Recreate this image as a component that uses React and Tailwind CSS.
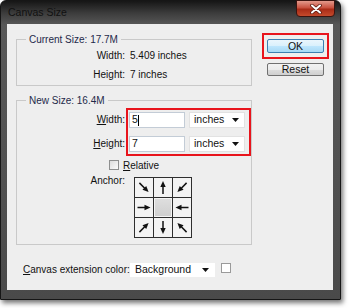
import React from 'react';

const ARROWS = [45, -90, 135, 0, null, 180, -45, 90, -135];

const Arrow = ({ angle }) => (
    <svg width="18" height="19" viewBox="0 0 18 19">
        <g transform={`rotate(${angle} 9 9.5)`}>
            <line x1="2.5" y1="9.5" x2="11" y2="9.5" stroke="#111" strokeWidth="1.5" />
            <polygon points="15.5,9.5 9.5,6.8 9.5,12.2" fill="#111" />
        </g>
    </svg>
);

const Dropdown = ({ value, className }) => (
    <div className={`flex items-center justify-between bg-white border border-[#e2e2e2] pl-[4px] pr-[5px] ${className}`}>
        <span>{value}</span>
        <svg width="7" height="4" viewBox="0 0 7 4">
            <path d="M0 0h7L3.5 4z" fill="#111" />
        </svg>
    </div>
);

const Legend = ({ children }) => (
    <legend className="ml-[9px] px-[3px] leading-[13px] text-[#1e2a4a]">{children}</legend>
);

const App = () => {
    return (
        <div className="w-[350px] h-[308px] bg-white font-['Liberation_Sans',Arial,sans-serif] text-[10px] text-[#111]">
            <div className="relative w-[341px] h-[300px] rounded-t-[6px] border border-[#161616] bg-[linear-gradient(to_bottom,#161616_0px,#3c3c3c_12px,#585858_24px,#4a4a4a_100%)] shadow-[2px_3px_5px_rgba(0,0,0,0.55)]">
                <div className="h-[23px] flex items-center pl-[7px] text-[10.5px] text-[#111]">Canvas Size</div>

                {/* close button */}
                <div className="absolute top-[-1px] right-[5px] w-[39px] h-[17px] rounded-b-[4px] border border-[#3a1410] bg-[linear-gradient(to_bottom,#e39a8c_0%,#c8513f_45%,#a92c17_55%,#c44a2c_100%)] flex items-center justify-center">
                    <svg width="12" height="10" viewBox="0 0 12 10">
                        <path d="M2 1.5L10 8.5M10 1.5L2 8.5" stroke="#5a1a10" strokeWidth="3.6" strokeLinecap="round" />
                        <path d="M2 1.5L10 8.5M10 1.5L2 8.5" stroke="#fff" strokeWidth="2" strokeLinecap="round" />
                    </svg>
                </div>

                <div className="ml-[6px] w-[326px] h-[266px] bg-[#eeeeee] flex pl-[9px] pt-[9px]">
                    <div className="w-[236px] flex flex-col">
                        <fieldset className="border border-[#c9c9c9] pb-[1px]">
                            <Legend>Current Size: 17.7M</Legend>
                            <div className="flex leading-[19px]">
                                <div className="w-[108px] text-right">
                                    <div>Width:</div>
                                    <div>Height:</div>
                                </div>
                                <div className="pl-[5px]">
                                    <div>5.409 inches</div>
                                    <div>7 inches</div>
                                </div>
                            </div>
                        </fieldset>

                        <fieldset className="mt-[8px] border border-[#c9c9c9] pb-[6px]">
                            <Legend>New Size: 16.4M</Legend>
                            <div className="flex mt-[1px]">
                                <div className="w-[108px] pt-[4px] flex flex-col gap-[8px] text-right leading-[16px]">
                                    <div><span className="underline">W</span>idth:</div>
                                    <div><span className="underline">H</span>eight:</div>
                                </div>
                                <div className="ml-[1px] border-2 border-[#e8141c] pl-[1px] pt-[2px] pr-[4px] pb-[2px] grid grid-cols-[56px_56px] gap-x-[4px] gap-y-[8px] text-[10.5px]">
                                    <div className="h-[16px] bg-white border border-[#c3ccd6] flex items-center pl-[2px]">
                                        5<span className="w-[1px] h-[11px] bg-black"></span>
                                    </div>
                                    <Dropdown value="inches" className="h-[16px]" />
                                    <div className="h-[16px] bg-white border border-[#c3ccd6] flex items-center pl-[2px]">7</div>
                                    <Dropdown value="inches" className="h-[16px]" />
                                </div>
                            </div>

                            <div className="mt-[2px] h-[14px] flex items-center pl-[92px] gap-[4px]">
                                <div className="w-[10px] h-[10px] border border-[#8e8f8f] bg-[linear-gradient(135deg,#dcdcdc,#fbfbfb)]"></div>
                                <span><span className="underline">R</span>elative</span>
                            </div>

                            <div className="flex items-start">
                                <div className="w-[108px] text-right leading-[13px] mt-[2px]">Anchor:</div>
                                <div className="ml-[9px] mt-[5px] grid grid-cols-[18px_18px_18px] grid-rows-[19px_19px_19px] gap-[1px] p-[1px] bg-[#2e2e2e]">
                                    {ARROWS.map((a, i) =>
                                        a === null ? (
                                            <div key={i} className="border border-[#f4f4f4] bg-[linear-gradient(to_bottom,#dedede,#cfcfcf)]"></div>
                                        ) : (
                                            <div key={i} className="bg-[#f3f3f3] flex items-center justify-center">
                                                <Arrow angle={a} />
                                            </div>
                                        )
                                    )}
                                </div>
                            </div>
                        </fieldset>

                        <div className="mt-[18px] flex items-start">
                            <div className="w-[114px] pl-[7px] h-[14px] leading-[14px] shrink-0">
                                <span className="underline">C</span>anvas extension color:
                            </div>
                            <Dropdown value="Background" className="w-[85px] h-[14px] border-white text-[10.5px]" />
                            <div className="ml-[6px] w-[10px] h-[10px] bg-white border border-[#9a9a9a]"></div>
                        </div>
                    </div>

                    <div className="ml-[10px] flex flex-col items-start">
                        <div className="border-2 border-[#e8141c] px-[3px] pt-[4px] pb-[3px]">
                            <button className="w-[57px] h-[14px] rounded-[2px] border border-[#3c7fb1] bg-[linear-gradient(to_bottom,#eaf6fd,#d9f0fc_50%,#bee6fd_51%,#a7d9f5)] text-[10.5px] leading-[12px] text-[#111]">OK</button>
                        </div>
                        <button className="ml-[5px] mt-[4px] w-[57px] h-[13px] rounded-[2px] border border-[#707070] bg-[linear-gradient(to_bottom,#f2f2f2,#ebebeb_50%,#dddddd_51%,#cfcfcf)] text-[10.5px] leading-[11px] text-[#111]">Reset</button>
                    </div>
                </div>
            </div>
        </div>
    );
};

export default App;
